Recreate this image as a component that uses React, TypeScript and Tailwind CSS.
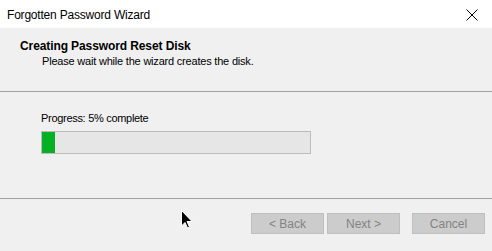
import React from "react";

export default function App() {
  return (
    <div
      className="w-[492px] h-[251px] bg-[#f0f0f0] flex flex-col relative overflow-hidden text-black"
      style={{ fontFamily: '"Liberation Sans", Arial, sans-serif' }}
    >
      <div className="h-[28px] bg-white flex items-center justify-between pl-[7px] pr-[14px] shrink-0">
        <span className="text-[12px] leading-none pt-[1px] tracking-[-0.2px]">Forgotten Password Wizard</span>
        <svg width="12" height="12" viewBox="0 0 12 12" className="mt-[1px]">
          <path d="M0.5 0.5 L11.5 11.5 M11.5 0.5 L0.5 11.5" stroke="#000" strokeWidth="1" />
        </svg>
      </div>
      <div className="h-[64px] shrink-0 border-b border-[#a0a0a0] pl-[20px] pt-[11px]">
        <div className="text-[12px] font-bold leading-[14px] tracking-[-0.1px]">Creating Password Reset Disk</div>
        <div className="text-[11px] leading-[14px] pl-[22px] mt-[1px] tracking-[-0.2px]">
          Please wait while the wizard creates the disk.
        </div>
      </div>
      <div className="h-[107px] shrink-0 border-b border-[#a0a0a0] pl-[41px] pt-[19px]">
        <div className="text-[11px] leading-[14px] tracking-[-0.3px]">Progress: 5% complete</div>
        <div className="mt-[6px] w-[270px] h-[23px] border border-[#bcbcbc] bg-[#e6e6e6]">
          <div className="h-full bg-[#06b025]" style={{ width: "13px" }} />
        </div>
      </div>
      <div className="flex-1 flex items-start pt-[14px] pl-[251px]">
        <button className="w-[73px] h-[21px] bg-[#cccccc] border border-[#bfbfbf] text-[12px] text-[#838383] leading-none">
          &lt; Back
        </button>
        <button className="ml-[3px] w-[73px] h-[21px] bg-[#cccccc] border border-[#bfbfbf] text-[12px] text-[#838383] leading-none">
          Next &gt;
        </button>
        <button className="ml-[12px] w-[73px] h-[21px] bg-[#cccccc] border border-[#bfbfbf] text-[12px] text-[#838383] leading-none">
          Cancel
        </button>
      </div>
      <svg
        className="absolute left-[181px] top-[210px]"
        width="12"
        height="19"
        viewBox="0 0 12 19"
      >
        <path
          d="M0.5 0.5 L0.5 16 L4 12.5 L6.5 18 L8.5 17 L6 11.5 L11 11.5 Z"
          fill="#000"
          stroke="#fff"
          strokeWidth="1"
        />
      </svg>
    </div>
  );
}
